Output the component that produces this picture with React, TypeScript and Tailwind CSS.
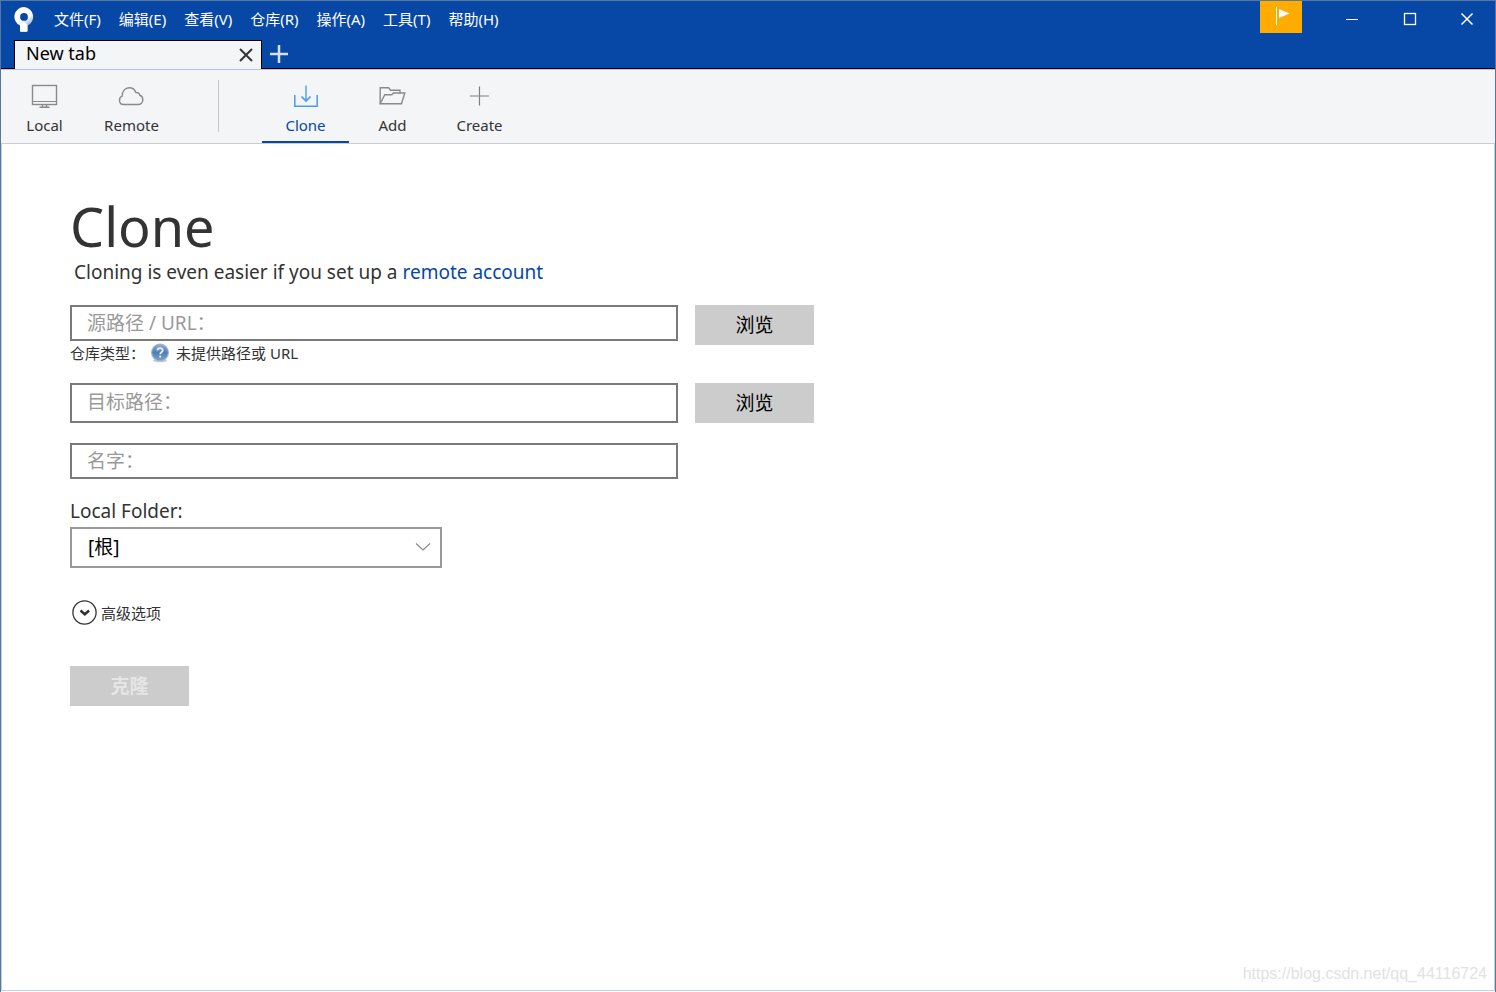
import React, { useState } from "react";

const menus = ["文件(F)", "编辑(E)", "查看(V)", "仓库(R)", "操作(A)", "工具(T)", "帮助(H)"];

function Logo() {
  return (
    <svg width="20" height="26" viewBox="0 0 20 26" aria-hidden="true">
      <defs>
        <linearGradient id="shade" gradientUnits="userSpaceOnUse" x1="12" y1="11" x2="17" y2="18">
          <stop offset="0" stopColor="#fff" />
          <stop offset="1" stopColor="#8fadd8" />
        </linearGradient>
      </defs>
      <path
        fill="url(#shade)"
        fillRule="evenodd"
        d="M10 0a9.700 9.700 0 0 0-4 18.500V24q0 .8 1 .8h5.500q1 0 1-.8v-5.500A9.700 9.700 0 0 0 10 0Zm0 6a3.900 3.900 0 1 1 0 7.800a3.900 3.900 0 0 1 0-7.800Z"
      />
      <path fill="#fff" d="M6 17v7q0 .8 1 .8h5.500q1 0 1-.8v-6l-2-2H8Z" />
    </svg>
  );
}

function MonitorIcon() {
  return (
    <svg width="28" height="26" viewBox="1 0 28 26" fill="none" stroke="#8a8a8a" aria-hidden="true">
      <rect x="2.500" y="2.500" width="24" height="19" strokeWidth="1.400" />
      <path d="M3 18.500h23" />
      <path d="M12.500 22v2M16.500 22v2M9.500 24.200h10" strokeWidth="1.400" />
    </svg>
  );
}

function CloudIcon() {
  return (
    <svg width="28" height="26" viewBox="1 0 28 26" fill="none" stroke="#8a8a8a" strokeWidth="1.400" aria-hidden="true">
      <path d="M6.500 21.500C3.800 21.500 2.500 19.600 2.500 17.200c0-2.100 1.300-3.600 2.700-4.100C5 8.300 8.200 4.800 12.200 4.800c3.100 0 5.600 1.800 6.700 4.700c3 .1 4 1.600 3.900 2.800c1.900.5 3 2.200 3 4.400c0 2.800-2.100 4.800-4.600 4.800Z" />
    </svg>
  );
}

function CloneIcon() {
  return (
    <svg width="28" height="26" viewBox="0 0 28 26" fill="none" stroke="#4a9bef" strokeWidth="1.500" aria-hidden="true">
      <path d="M2.800 12v11.300h22.400V12" />
      <path d="M14 2.500v15" stroke="#7db8f5" strokeWidth="2" />
      <path d="M9.500 13.500l4.500 4.500l4.500-4.500" strokeWidth="1.700" />
    </svg>
  );
}

function FolderIcon() {
  return (
    <svg width="28" height="26" viewBox="1 0 28 26" fill="none" stroke="#8a8a8a" strokeWidth="1.400" aria-hidden="true">
      <path d="M2.200 20.800V4.800h8.500l1.800 2.400h9.500v3" />
      <path d="M2.200 20.800L6.800 11.800h7l1.700-1.800h11.300L23.500 20.800Z" />
    </svg>
  );
}

function PlusIcon() {
  return (
    <svg width="28" height="26" viewBox="1 0 28 26" fill="none" stroke="#808080" strokeWidth="1.200" aria-hidden="true">
      <path d="M14.500 3.500v19M5 13h19" />
    </svg>
  );
}

function HelpIcon() {
  return (
    <svg width="20" height="20" viewBox="0 0 20 20" aria-hidden="true">
      <defs>
        <linearGradient id="ball" x1="0" y1="0" x2="0" y2="1">
          <stop offset="0" stopColor="#8fb0d8" />
          <stop offset="0.500" stopColor="#4f7db5" />
          <stop offset="1" stopColor="#7ba3d2" />
        </linearGradient>
      </defs>
      <ellipse cx="10" cy="17.500" rx="7" ry="1.800" fill="#c9c9c9" />
      <circle cx="10" cy="9.500" r="8.400" fill="url(#ball)" stroke="#a5b4c8" strokeWidth="1.200" />
      <path d="M7.500 7.600c0-3.200 5.200-3.200 5.200-.2c0 1.900-2.500 1.900-2.500 3.900" fill="none" stroke="#e6edf6" strokeWidth="1.800" />
      <circle cx="10.200" cy="13.600" r="1.100" fill="#e6edf6" />
    </svg>
  );
}

function ToolButton({ label, active, children }: { label: string; active?: boolean; children: React.ReactNode }) {
  return (
    <button
      type="button"
      className={`flex w-[87px] flex-col items-center border-b-2 pt-[13px] text-[15px] leading-5 ${
        active ? "border-[#0747a6] text-[#0747a6]" : "border-transparent text-[#333333]"
      }`}
    >
      {children}
      <span className="mt-[6px]">{label}</span>
    </button>
  );
}

const field = "w-full border-2 border-[#7a7a7a] bg-white px-[15px] text-[19px] text-black placeholder:text-[#999999] outline-none";
const browse = "h-10 w-[119px] shrink-0 bg-[#cccccc] text-[19px] text-black";

export default function App() {
  const [open, setOpen] = useState(false);
  return (
    <div className="flex min-h-screen flex-col border-x border-t border-[#57779c] bg-white pb-px font-['Noto_Sans','Noto_Sans_CJK_SC',sans-serif] text-[#333333]">
      <header className="bg-[#0747a6]">
        <div className="flex h-[39px] items-start">
          <div className="ml-[13px] pt-[6px]">
            <Logo />
          </div>
          <nav className="ml-5 flex h-[37px] items-center gap-[18px] text-[15px] text-white">
            {menus.map((m) => (
              <button key={m} type="button">
                {m}
              </button>
            ))}
          </nav>
          <div className="ml-auto flex">
            <button type="button" aria-label="Notifications" className="mr-[21px] flex h-8 w-[42px] justify-center bg-[#ffab00]">
              <svg width="42" height="32" viewBox="0 0 42 32" aria-hidden="true">
                <path d="M16.500 6v18" stroke="#fff" />
                <path d="M19 8l10.500 4.500L19 17Z" fill="#fff" />
              </svg>
            </button>
            <button type="button" aria-label="Minimize" className="flex h-9 w-[58px] items-center justify-center">
              <svg width="14" height="14" fill="none" stroke="#fff" aria-hidden="true">
                <path d="M1 7.500h12" />
              </svg>
            </button>
            <button type="button" aria-label="Maximize" className="flex h-9 w-[57px] items-center justify-center">
              <svg width="14" height="14" fill="none" stroke="#fff" strokeWidth="1.300" aria-hidden="true">
                <rect x="1.500" y="1.500" width="11" height="11" />
              </svg>
            </button>
            <button type="button" aria-label="Close" className="flex h-9 w-[57px] items-center justify-center">
              <svg width="14" height="14" fill="none" stroke="#fff" strokeWidth="1.500" aria-hidden="true">
                <path d="M1.500 1.500l11 11M12.500 1.500l-11 11" />
              </svg>
            </button>
          </div>
        </div>
        <div className="flex h-[29px]">
          <div className="w-[13px] border-b border-black" />
          <div className="flex w-[248px] items-start border-x border-t border-black bg-[#f4f5f7] pl-[11px] text-[18px] leading-6 text-black">
            <span className="flex-1">New tab</span>
            <button type="button" aria-label="Close tab" className="mr-[8px] pt-[7px]">
              <svg width="14" height="14" fill="none" stroke="#333" strokeWidth="2" aria-hidden="true">
                <path d="M1 1l12 12M13 1L1 13" />
              </svg>
            </button>
          </div>
          <div className="flex-1 border-b border-black pl-2">
            <button type="button" aria-label="Add tab" className="block pt-[5px]">
              <svg width="18" height="18" fill="none" stroke="#d5dff0" strokeWidth="2.500" aria-hidden="true">
                <path d="M9 0v18M0 9h18" />
              </svg>
            </button>
          </div>
        </div>
      </header>

      <div className="flex h-[75px] border-y border-t-[#b3c5dc] border-b-[#c9ccd1] bg-[#f4f5f7]">
        <ToolButton label="Local">
          <MonitorIcon />
        </ToolButton>
        <ToolButton label="Remote">
          <CloudIcon />
        </ToolButton>
        <div className="mt-[10px] mr-[43px] ml-[43px] h-[52px] w-px bg-[#c6c8cc]" />
        <ToolButton label="Clone" active>
          <CloneIcon />
        </ToolButton>
        <ToolButton label="Add">
          <FolderIcon />
        </ToolButton>
        <ToolButton label="Create">
          <PlusIcon />
        </ToolButton>
      </div>

      <div className="flex flex-1 flex-col border-x border-b border-[#bfd0e6]">
        <main className="flex-1 pt-12 pl-[68px]">
          <h1 className="text-[54px] leading-[68px]">Clone</h1>
          <p className="pl-1 text-[19px] leading-6">
            Cloning is even easier if you set up a{" "}
            <a href="#remote" className="text-[#0747a6]">
              remote account
            </a>
          </p>
          <form className="mt-[21px] max-w-[744px]" onSubmit={(e) => e.preventDefault()}>
            <div className="flex gap-[17px]">
              <div className="min-w-0 flex-1">
                <input aria-label="源路径 / URL" placeholder="源路径 / URL：" className={`${field} block h-9`} />
                <div className="mt-[2px] flex h-5 items-center text-[15px]">
                  <span>仓库类型：</span>
                  <span className="mr-[6px] ml-[5px]">
                    <HelpIcon />
                  </span>
                  <span>未提供路径或 URL</span>
                </div>
              </div>
              <button type="button" className={browse}>
                浏览
              </button>
            </div>
            <div className="mt-5 flex gap-[17px]">
              <div className="min-w-0 flex-1">
                <input aria-label="目标路径" placeholder="目标路径：" className={`${field} block h-10 pb-[3px]`} />
              </div>
              <button type="button" className={browse}>
                浏览
              </button>
            </div>
            <div className="mt-5 mr-[136px]">
              <input aria-label="名字" placeholder="名字：" className={`${field} block h-9`} />
            </div>
            <label htmlFor="folder" className="mt-5 block text-[19px] leading-6">
              Local Folder:
            </label>
            <div className="relative mt-1 w-[372px]">
              <select
                id="folder"
                className="block h-[41px] w-full appearance-none border-2 border-[#999999] bg-white px-4 text-[19px] text-black outline-none"
              >
                <option>[根]</option>
              </select>
              <svg
                className="pointer-events-none absolute top-[15px] right-[11px]"
                width="16"
                height="10"
                fill="none"
                stroke="#8a8a8a"
                strokeWidth="1.200"
                aria-hidden="true"
              >
                <path d="M1 1.500l7 6.500l7-6.500" />
              </svg>
            </div>
            <button
              type="button"
              aria-expanded={open}
              onClick={() => setOpen(!open)}
              className="mt-8 ml-[2px] flex items-center gap-1 text-[15px] leading-6"
            >
              <svg width="25" height="25" fill="none" stroke="#333" aria-hidden="true">
                <circle cx="12.500" cy="12.500" r="11.600" strokeWidth="1.300" />
                <path d="M8.500 10.500l4.300 3.800l4.300-3.800" strokeWidth="2.600" />
              </svg>
              高级选项
            </button>
            <button type="submit" disabled className="mt-[41px] h-10 w-[119px] bg-[#cccccc] text-[19px] font-bold text-[#e6e6e6]">
              克隆
            </button>
          </form>
        </main>
        <footer className="pr-[7px] pb-[6px] text-right font-['Liberation_Sans',sans-serif] text-[16px] leading-5 text-[#e2e2e2]">
          https://blog.csdn.net/qq_44116724
        </footer>
      </div>
    </div>
  );
}
